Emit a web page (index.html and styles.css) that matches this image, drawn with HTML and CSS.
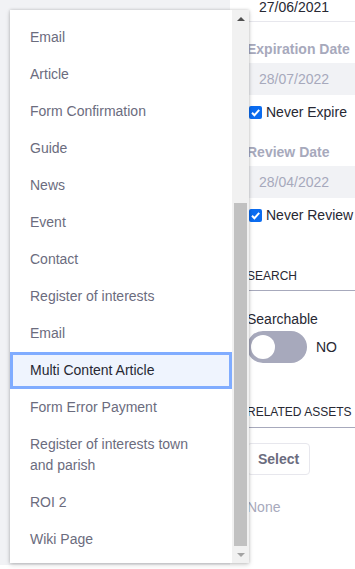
FILE: index.html
```html
<!DOCTYPE html>
<html lang="en">
<head>
  <meta charset="UTF-8" />
  <meta name="viewport" content="width=device-width, initial-scale=1.0">
  <title>Structure picker</title>
  <link rel="stylesheet" href="styles.css">
</head>
<body>
  <div class="page">
    <div class="backdrop"></div>

    <aside class="panel">
      <div class="date-input top">27/06/2021</div>

      <label class="field-label">Expiration Date</label>
      <div class="date-input disabled">28/07/2022</div>
      <div class="check-row">
        <span class="check"><svg viewBox="0 0 13 13"><path d="M3 6.8l2.4 2.4L10.2 3.8" /></svg></span>
        Never Expire
      </div>

      <label class="field-label review">Review Date</label>
      <div class="date-input disabled">28/04/2022</div>
      <div class="check-row">
        <span class="check"><svg viewBox="0 0 13 13"><path d="M3 6.8l2.4 2.4L10.2 3.8" /></svg></span>
        Never Review
      </div>

      <h3 class="sheet-title search-title">Search</h3>
      <div class="toggle-label">Searchable</div>
      <div class="toggle-row">
        <span class="toggle"><span class="knob"></span></span>
        <span class="toggle-text">NO</span>
      </div>

      <h3 class="sheet-title related-title">Related Assets</h3>
      <button class="btn-select">Select</button>
      <div class="none">None</div>
    </aside>
  </div>

  <!-- lista desplegable abierta sobre el panel -->
  <div class="dropdown">
    <ul class="options">
      <li>Email</li>
      <li>Article</li>
      <li>Form Confirmation</li>
      <li>Guide</li>
      <li>News</li>
      <li>Event</li>
      <li>Contact</li>
      <li>Register of interests</li>
      <li>Email</li>
      <li class="selected">Multi Content Article</li>
      <li>Form Error Payment</li>
      <li>Register of interests town and parish</li>
      <li>ROI 2</li>
      <li>Wiki Page</li>
    </ul>
    <div class="scrollbar">
      <span class="arrow up"></span>
      <span class="track-gap"></span>
      <span class="thumb"></span>
      <span class="arrow down"></span>
    </div>
  </div>
</body>
</html>
```

FILE: styles.css
```css
body {
  margin: 0;
  font-family: "Liberation Sans", Arial, sans-serif;
  font-size: 14px;
  color: #272833;
  background: #fff;
  overflow: hidden;
  height: 569px;
}
.page {
  display: flex;
  height: 569px;
}
.backdrop {
  width: 230px;
  flex-shrink: 0;
  background: #f1f2f5;
  height: 565px;
}
.panel {
  width: 300px;
  flex-shrink: 0;
  background: #fff;
  padding-left: 17px;
  margin-top: -10px;
  display: flex;
  flex-direction: column;
  align-items: flex-start;
}
.date-input {
  box-sizing: border-box;
  width: 100%;
  height: 32px;
  padding: 0 12px;
  display: flex;
  align-items: center;
  line-height: 20px;
}
.date-input.top {
  height: 32px;
  padding-top: 3px;
  border-bottom: 1px solid #e7e7ed;
}
.date-input.disabled {
  background: #f1f2f5;
  color: #a7a9bc;
  margin-top: 4px;
}
.field-label {
  font-weight: bold;
  color: #a7a9bc;
  line-height: 20px;
  margin-top: 17px;
}
.field-label.review {
  margin-top: 20px;
}
.check-row {
  display: flex;
  align-items: center;
  gap: 4px;
  line-height: 20px;
  margin-top: 7px;
  margin-left: 2px;
}
.check {
  width: 13px;
  height: 13px;
  border-radius: 2px;
  background: #0b6cf0;
  display: flex;
}
.check svg {
  width: 13px;
  height: 13px;
}
.check path {
  fill: none;
  stroke: #fff;
  stroke-width: 2;
}
.sheet-title {
  margin: 41px 0 0;
  width: 100%;
  font-size: 12px;
  font-weight: normal;
  text-transform: uppercase;
  line-height: 20px;
  padding-bottom: 4px;
  border-bottom: 1px solid #a7a9bc;
}
.related-title {
  margin-top: 39px;
  padding-bottom: 5px;
}
.toggle-label {
  line-height: 20px;
  margin-top: 18px;
}
.toggle-row {
  display: flex;
  align-items: center;
  gap: 9px;
  margin-top: 2px;
}
.toggle {
  width: 60px;
  height: 32px;
  border-radius: 16px;
  background: #a7a9bc;
  display: flex;
  align-items: center;
  padding-left: 4px;
  box-sizing: border-box;
}
.knob {
  width: 24px;
  height: 24px;
  border-radius: 50%;
  background: #fff;
}
.toggle-text {
  font-size: 14px;
}
.btn-select {
  margin-top: 15px;
  height: 32px;
  padding: 0 10px;
  font-family: inherit;
  font-size: 14px;
  font-weight: bold;
  color: #6b6c7e;
  background: #fff;
  border: 1px solid #e7e7ed;
  border-radius: 4px;
}
.none {
  color: #a7a9bc;
  line-height: 20px;
  margin-top: 22px;
}

/* lista desplegable */
.dropdown {
  position: absolute;
  left: 10px;
  top: 10px;
  width: 239px;
  height: 553px;
  background: #fff;
  display: flex;
  box-shadow: 0 0 3px rgba(0, 0, 0, 0.2), 0 2px 5px rgba(0, 0, 0, 0.15);
}
.options {
  list-style: none;
  margin: 0;
  padding: 9px 0 0;
  width: 222px;
  overflow: hidden;
}
.options li {
  padding: 8px 30px 8px 20px;
  line-height: 21px;
  color: #6b6c7e;
}
.options li.selected {
  color: #272833;
  background: #eff4fe;
  box-shadow: inset 0 0 0 3px #80acff;
}
.scrollbar {
  width: 17px;
  background: #f1f1f1;
  display: flex;
  flex-direction: column;
  align-items: center;
}
.arrow {
  height: 17px;
  width: 17px;
  display: flex;
  align-items: center;
  justify-content: center;
  flex-shrink: 0;
}
.arrow::before {
  content: "";
  border-left: 4px solid transparent;
  border-right: 4px solid transparent;
}
.arrow.up::before {
  border-bottom: 4px solid #505050;
}
.arrow.down::before {
  border-top: 4px solid #a3a3a3;
}
.track-gap {
  height: 176px;
  flex-shrink: 0;
}
.thumb {
  width: 13px;
  height: 343px;
  background: #c1c1c1;
  flex-shrink: 0;
}
```
